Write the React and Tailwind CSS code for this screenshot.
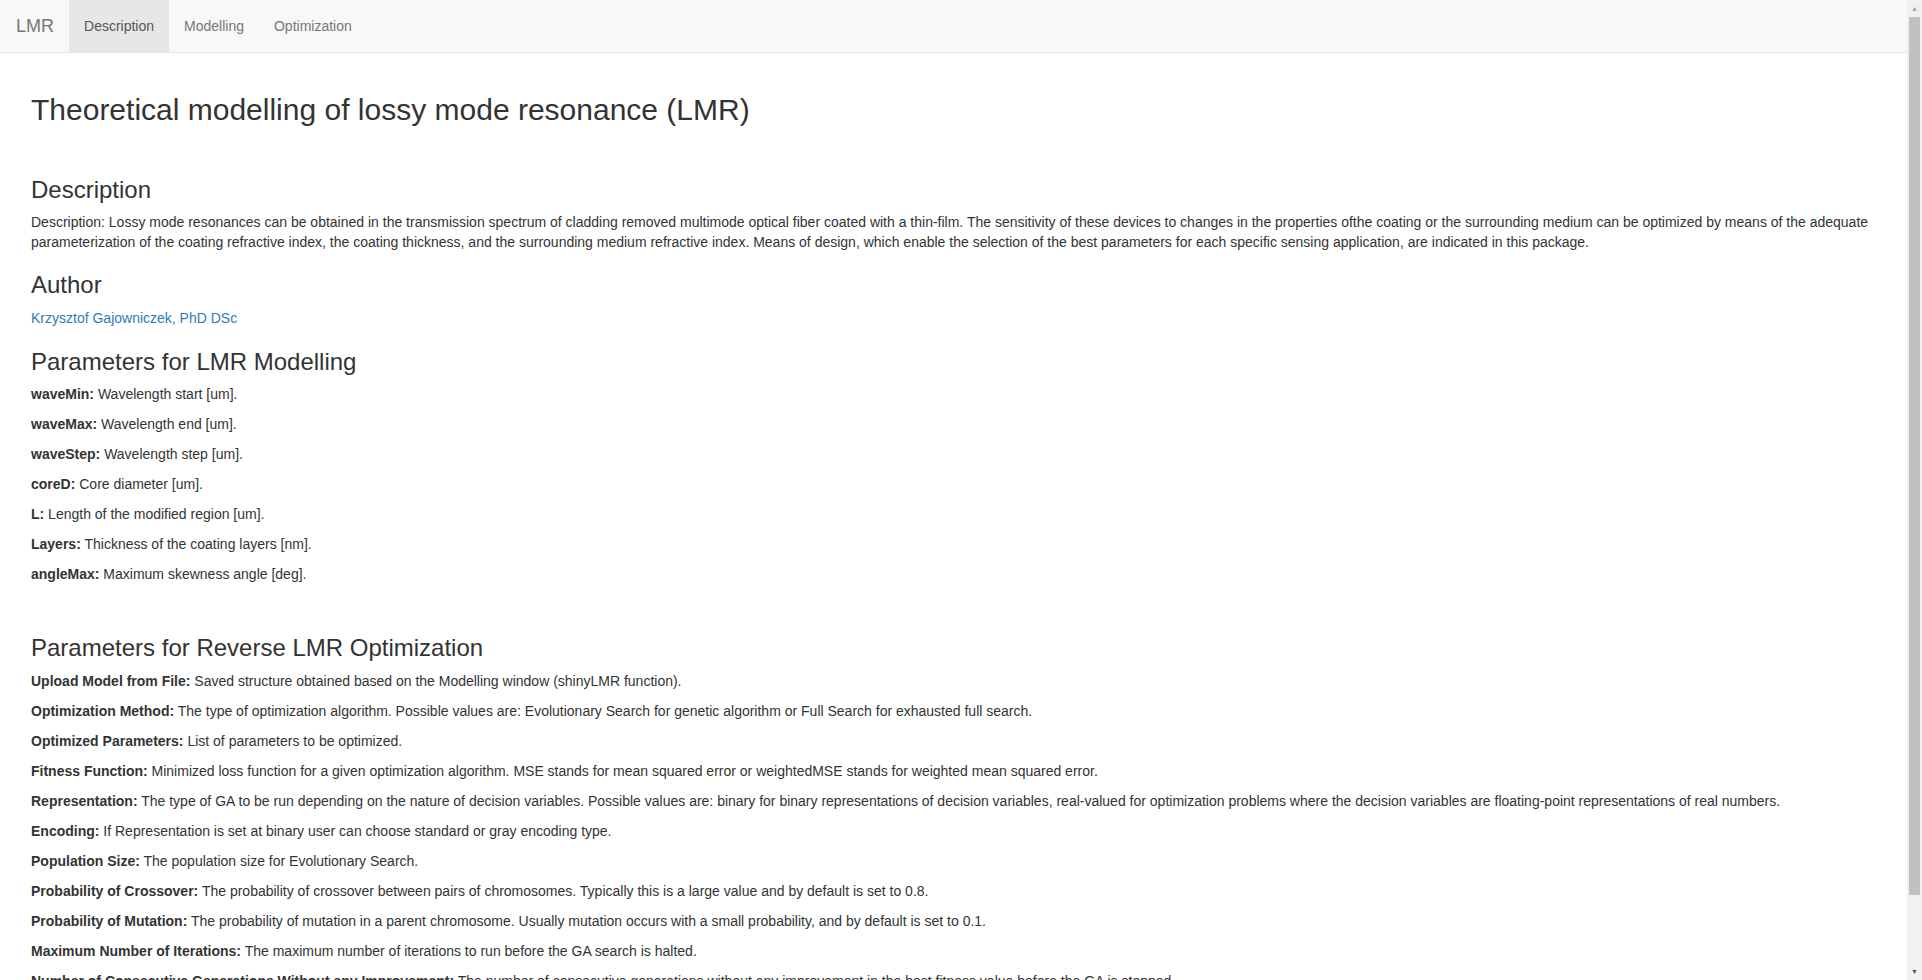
import React, { useState } from 'react';

const modellingParams = [
  ['waveMin:', 'Wavelength start [um].'],
  ['waveMax:', 'Wavelength end [um].'],
  ['waveStep:', 'Wavelength step [um].'],
  ['coreD:', 'Core diameter [um].'],
  ['L:', 'Length of the modified region [um].'],
  ['Layers:', 'Thickness of the coating layers [nm].'],
  ['angleMax:', 'Maximum skewness angle [deg].']
];

const optimizationParams = [
  ['Upload Model from File:', 'Saved structure obtained based on the Modelling window (shinyLMR function).'],
  ['Optimization Method:', 'The type of optimization algorithm. Possible values are: Evolutionary Search for genetic algorithm or Full Search for exhausted full search.'],
  ['Optimized Parameters:', 'List of parameters to be optimized.'],
  ['Fitness Function:', 'Minimized loss function for a given optimization algorithm. MSE stands for mean squared error or weightedMSE stands for weighted mean squared error.'],
  ['Representation:', 'The type of GA to be run depending on the nature of decision variables. Possible values are: binary for binary representations of decision variables, real-valued for optimization problems where the decision variables are floating-point representations of real numbers.'],
  ['Encoding:', 'If Representation is set at binary user can choose standard or gray encoding type.'],
  ['Population Size:', 'The population size for Evolutionary Search.'],
  ['Probability of Crossover:', 'The probability of crossover between pairs of chromosomes. Typically this is a large value and by default is set to 0.8.'],
  ['Probability of Mutation:', 'The probability of mutation in a parent chromosome. Usually mutation occurs with a small probability, and by default is set to 0.1.'],
  ['Maximum Number of Iterations:', 'The maximum number of iterations to run before the GA search is halted.'],
  ['Number of Consecutive Generations Without any Improvement:', 'The number of consecutive generations without any improvement in the best fitness value before the GA is stopped.']
];

function ParamList({ items, className }) {
  return (
    <div className={className}>
      {items.map(([name, text]) => (
        <p key={name} className="mb-[10px] text-[14px] leading-[20px]">
          <b className="font-bold">{name}</b> {text}
        </p>
      ))}
    </div>
  );
}

// barra de rolagem clássica (desenhada)
function Scrollbar() {
  return (
    <aside className="sticky top-0 flex h-screen w-[15px] shrink-0 flex-col bg-[#f1f1f1]">
      <div className="flex h-[17px] items-center justify-center text-[7px] leading-none text-[#a3a3a3]">▲</div>
      <div className="mx-[2px] h-[878px] bg-[#c1c1c1]" />
      <div className="flex-1" />
      <div className="flex h-[17px] items-center justify-center text-[7px] leading-none text-[#505050]">▼</div>
    </aside>
  );
}

function App() {
  const [tab, setTab] = useState('Description');
  const tabs = ['Description', 'Modelling', 'Optimization'];

  return (
    <div className="flex min-h-screen items-start bg-white font-['Liberation_Sans',Arial,sans-serif] text-[#333]">
      <div className="min-w-0 flex-1">
        {/* Navbar */}
        <nav className="flex h-[53px] items-start border-b border-[#e7e7e7] bg-[#f8f8f8]">
          <span className="pl-[16px] pr-[15px] py-[16px] text-[18px] leading-[20px] text-[#777]">LMR</span>
          <ul className="flex">
            {tabs.map(t => (
              <li key={t}>
                <button
                  type="button"
                  onClick={() => setTab(t)}
                  className={`h-[52px] px-[15px] pt-[16px] pb-[16px] text-[14px] leading-[20px] ${
                    tab === t ? 'bg-[#e7e7e7] text-[#555]' : 'text-[#777]'
                  }`}
                >
                  {t}
                </button>
              </li>
            ))}
          </ul>
        </nav>

        {/* Conteúdo */}
        <main className="px-[31px] pb-[50px]">
          <h2 className="mt-[40px] text-[30px] leading-[33px] font-normal">
            Theoretical modelling of lossy mode resonance (LMR)
          </h2>

          <h3 className="mt-[51px] text-[24px] leading-[26.4px] font-normal">Description</h3>
          <p className="mt-[9px] text-[14px] leading-[20px]">
            Description: Lossy mode resonances can be obtained in the transmission spectrum of cladding removed multimode optical fiber coated with a thin-film. The sensitivity of these devices to changes in the properties ofthe coating or the surrounding medium can be optimized by means of the adequate parameterization of the coating refractive index, the coating thickness, and the surrounding medium refractive index. Means of design, which enable the selection of the best parameters for each specific sensing application, are indicated in this package.
          </p>

          <h3 className="mt-[20px] text-[24px] leading-[26.4px] font-normal">Author</h3>
          <p className="mt-[9px] text-[14px] leading-[20px]">
            <a href="#" className="text-[#337ab7]">Krzysztof Gajowniczek, PhD DSc</a>
          </p>

          <h3 className="mt-[21px] text-[24px] leading-[26.4px] font-normal">Parameters for LMR Modelling</h3>
          <ParamList items={modellingParams} className="mt-[9px]" />

          <h3 className="mt-[51px] text-[24px] leading-[26.4px] font-normal">Parameters for Reverse LMR Optimization</h3>
          <ParamList items={optimizationParams} className="mt-[9px]" />
        </main>
      </div>
      <Scrollbar />
    </div>
  );
}

export default App;
